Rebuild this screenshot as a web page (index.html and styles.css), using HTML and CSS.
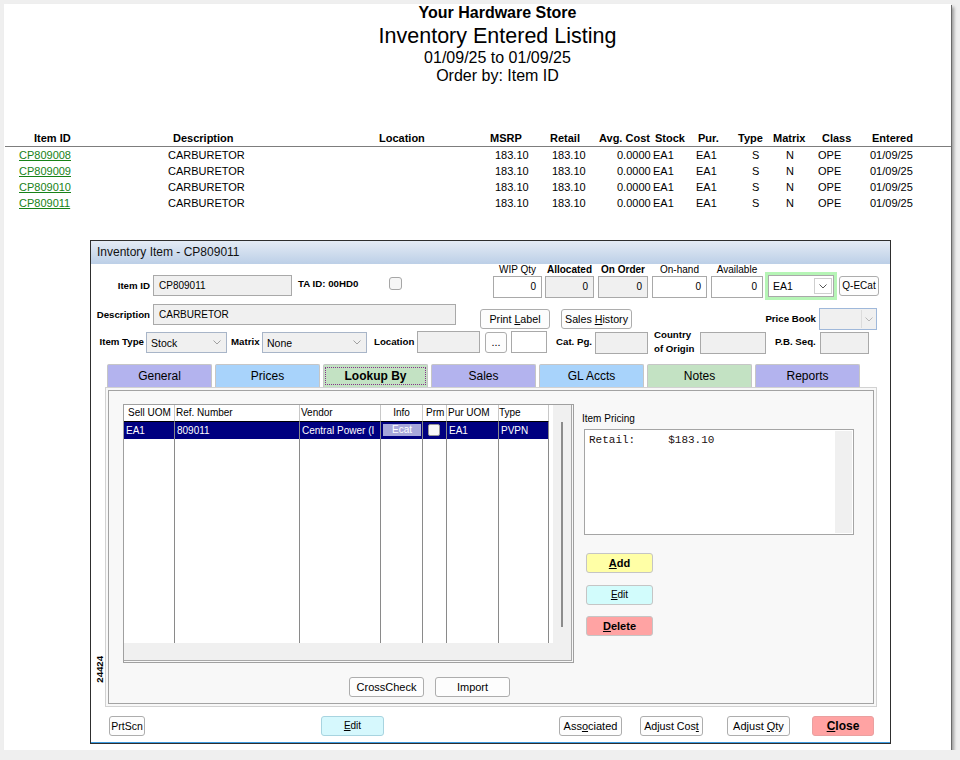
FILE: index.html
```html
<!DOCTYPE html>
<html>
<head>
<meta charset="utf-8">
<title>Inventory Entered Listing</title>
<link rel="stylesheet" href="styles.css">
</head>
<body>
<div class="sheet">
  <div class="rpt-head">
    <div class="h-store">Your Hardware Store</div>
    <div class="h-title">Inventory Entered Listing</div>
    <div class="h-range">01/09/25 to 01/09/25</div>
    <div class="h-order">Order by: Item ID</div>
  </div>
  <div class="rpt">
    <div class="rrow rhead">
      <div>Item ID</div><div>Description</div><div>Location</div><div>MSRP</div><div>Retail</div><div>Avg. Cost</div><div>Stock</div><div>Pur.</div><div>Type</div><div>Matrix</div><div>Class</div><div>Entered</div>
    </div>
    <div class="rrow rdata">
      <div><a href="#">CP809008</a></div><div>CARBURETOR</div><div></div><div>183.10</div><div>183.10</div><div>0.0000</div><div>EA1</div><div>EA1</div><div>S</div><div>N</div><div>OPE</div><div>01/09/25</div>
    </div>
    <div class="rrow rdata">
      <div><a href="#">CP809009</a></div><div>CARBURETOR</div><div></div><div>183.10</div><div>183.10</div><div>0.0000</div><div>EA1</div><div>EA1</div><div>S</div><div>N</div><div>OPE</div><div>01/09/25</div>
    </div>
    <div class="rrow rdata">
      <div><a href="#">CP809010</a></div><div>CARBURETOR</div><div></div><div>183.10</div><div>183.10</div><div>0.0000</div><div>EA1</div><div>EA1</div><div>S</div><div>N</div><div>OPE</div><div>01/09/25</div>
    </div>
    <div class="rrow rdata">
      <div><a href="#">CP809011</a></div><div>CARBURETOR</div><div></div><div>183.10</div><div>183.10</div><div>0.0000</div><div>EA1</div><div>EA1</div><div>S</div><div>N</div><div>OPE</div><div>01/09/25</div>
    </div>
  </div>
</div>

<div class="dlg">
  <div class="dlg-title">Inventory Item - CP809011</div>
  <div class="dlg-body">
    <div class="row row-a">
      <span class="lbl l-itemid">Item ID</span>
      <div class="inp i-itemid">CP809011</div>
      <span class="lbl l-ta">TA ID: 00HD0</span>
      <span class="chk"></span>
      <div class="qty">
        <div class="qcol q1"><span class="qlbl">WIP Qty</span><div class="qbox">0</div></div>
        <div class="qcol q2"><span class="qlbl b">Allocated</span><div class="qbox dis">0</div></div>
        <div class="qcol q3"><span class="qlbl b">On Order</span><div class="qbox dis">0</div></div>
        <div class="qcol q4"><span class="qlbl">On-hand</span><div class="qbox">0</div></div>
        <div class="qcol q5"><span class="qlbl">Available</span><div class="qbox">0</div></div>
      </div>
      <div class="uom">
        <div class="uom-sel"><span>EA1</span><span class="ddbox"><svg width="8" height="5" viewBox="0 0 8 5"><polyline points="0.5,0.5 4,4 7.5,0.5" fill="none" stroke="#555" stroke-width="1"/></svg></span></div>
      </div>
      <button class="btn qecat">Q-ECat</button>
    </div>

    <div class="row row-b">
      <span class="lbl l-desc">Description</span>
      <div class="inp i-desc">CARBURETOR</div>
      <button class="btn b-print">Print <u>L</u>abel</button>
      <button class="btn b-sales">Sales <u>H</u>istory</button>
      <span class="lbl l-pb">Price Book</span>
      <div class="sel s-pb"><span class="chev pbchev"><svg width="8" height="5" viewBox="0 0 8 5"><polyline points="0.5,0.5 4,4 7.5,0.5" fill="none" stroke="#b8b8b8" stroke-width="1"/></svg></span></div>
    </div>

    <div class="row row-c">
      <span class="lbl l-type">Item Type</span>
      <div class="sel s-type"><span>Stock</span><span class="chev"><svg width="8" height="5" viewBox="0 0 8 5"><polyline points="0.5,0.5 4,4 7.5,0.5" fill="none" stroke="#a0a0a0" stroke-width="1"/></svg></span></div>
      <span class="lbl l-matrix">Matrix</span>
      <div class="sel s-matrix"><span>None</span><span class="chev"><svg width="8" height="5" viewBox="0 0 8 5"><polyline points="0.5,0.5 4,4 7.5,0.5" fill="none" stroke="#a0a0a0" stroke-width="1"/></svg></span></div>
      <span class="lbl l-loc">Location</span>
      <div class="inp i-loc"></div>
      <button class="btn b-dots">...</button>
      <div class="inp white i-locw"></div>
      <span class="lbl l-cat">Cat. Pg.</span>
      <div class="inp i-cat"></div>
      <span class="lbl l-coo">Country<br>of Origin</span>
      <div class="inp i-coo"></div>
      <span class="lbl l-pbs">P.B. Seq.</span>
      <div class="inp i-pbs"></div>
    </div>

    <div class="tabs">
      <div class="tab lav">General</div>
      <div class="tab blu">Prices</div>
      <div class="tab grn active"><span class="focus">Lookup By</span></div>
      <div class="tab lav">Sales</div>
      <div class="tab blu">GL Accts</div>
      <div class="tab grn">Notes</div>
      <div class="tab lav">Reports</div>
    </div>

    <div class="prow">
      <div class="vlabel">24424</div>
      <div class="panel">
        <div class="panel-in">
          <div class="lk-top">
            <div class="grid">
              <div class="gwrap">
                <div class="gmain">
                  <div class="gtable">
                    <div class="gc gh h1">Sell UOM</div>
                    <div class="gc gh h2">Ref. Number</div>
                    <div class="gc gh h3">Vendor</div>
                    <div class="gc gh h4">Info</div>
                    <div class="gc gh h5">Prm</div>
                    <div class="gc gh h6">Pur UOM</div>
                    <div class="gc gh h7">Type</div>
                    <div class="gc gs">EA1</div>
                    <div class="gc gs">809011</div>
                    <div class="gc gs">Central Power (I</div>
                    <div class="gc gs gs-info"><span class="ecat">Ecat</span></div>
                    <div class="gc gs gs-prm"><span class="gchk"></span></div>
                    <div class="gc gs">EA1</div>
                    <div class="gc gs">PVPN</div>
                    <div class="gc"></div><div class="gc"></div><div class="gc"></div><div class="gc"></div><div class="gc"></div><div class="gc"></div><div class="gc"></div>
                  </div>
                  <div class="vscroll"><div class="thumb"></div></div>
                </div>
                <div class="hscroll"></div>
              </div>
            </div>
            <div class="pricing">
              <div class="pr-lbl">Item Pricing</div>
              <div class="pbox">
                <div class="ptext">Retail:     $183.10</div>
                <div class="pscroll"></div>
              </div>
              <button class="btn cbtn add"><u>A</u>dd</button>
              <button class="btn cbtn edit1"><u>E</u>dit</button>
              <button class="btn cbtn del"><u>D</u>elete</button>
            </div>
          </div>
          <div class="lk-bottom">
            <button class="btn b-cross">CrossCheck</button>
            <button class="btn b-import">Import</button>
          </div>
        </div>
      </div>
    </div>

    <div class="row row-bot">
      <button class="btn b-prt">PrtScn</button>
      <button class="btn b-edit"><u>E</u>dit</button>
      <button class="btn b-assoc">Ass<u>o</u>ciated</button>
      <button class="btn b-acost">Adjust Cos<u>t</u></button>
      <button class="btn b-aqty">Adjust <u>Q</u>ty</button>
      <button class="btn b-close"><u>C</u>lose</button>
    </div>
  </div>
</div>
</body>
</html>
```

FILE: styles.css
```css
* { box-sizing: border-box; }
body {
  margin: 0;
  background: #efefef;
  font-family: "Liberation Sans", Arial, sans-serif;
  color: #000;
}

/* ---------- report sheet ---------- */
.sheet {
  margin: 4px 0 0 4px;
  width: 947px;
  height: 746px;
  background: #fff;
  box-shadow: 1px 1px 0 #6a6a6a, 3px 3px 3px rgba(0,0,0,0.35);
}
.rpt-head { padding-left: 40px; text-align: center; }
.h-store { font-size: 16px; font-weight: bold; line-height: 18px; }
.h-title { font-size: 21.5px; line-height: 28px; }
.h-range { font-size: 16px; line-height: 16px; }
.h-order { font-size: 16px; line-height: 20px; }

.rpt { margin: 44px 0 0 1px; width: 946px; font-size: 11px; }
.rrow {
  display: grid;
  grid-template-columns: 95px 205px 175px 50px 60px 63px 37px 40px 38px 44px 48px 91px;
  height: 16px;
  line-height: 16px;
  white-space: nowrap;
}
.rhead { font-weight: bold; height: 17px; border-bottom: 1px solid #7d7d7d; }
.rhead > div:nth-child(1) { padding-left: 29px; }
.rhead > div:nth-child(2) { padding-left: 73px; }
.rhead > div:nth-child(3) { padding-left: 74px; }
.rhead > div:nth-child(4) { padding-left: 10px; }
.rhead > div:nth-child(5) { padding-left: 20px; }
.rhead > div:nth-child(6) { padding-left: 9px; }
.rhead > div:nth-child(7) { padding-left: 2px; }
.rhead > div:nth-child(8) { padding-left: 8px; }
.rhead > div:nth-child(9) { padding-left: 8px; }
.rhead > div:nth-child(10) { padding-left: 5px; }
.rhead > div:nth-child(11) { padding-left: 10px; }
.rhead > div:nth-child(12) { padding-left: 12px; }
.rdata > div:nth-child(1) { padding-left: 14px; }
.rdata > div:nth-child(2) { padding-left: 68px; }
.rdata > div:nth-child(4) { padding-left: 15px; }
.rdata > div:nth-child(5) { padding-left: 22px; }
.rdata > div:nth-child(6) { padding-left: 27px; }
.rdata > div:nth-child(7) { padding-left: 0; }
.rdata > div:nth-child(8) { padding-left: 6px; }
.rdata > div:nth-child(9) { padding-left: 22px; }
.rdata > div:nth-child(10) { padding-left: 18px; }
.rdata > div:nth-child(11) { padding-left: 6px; }
.rdata > div:nth-child(12) { padding-left: 10px; }
.rdata a { color: #178217; text-decoration: underline; }

/* ---------- dialog ---------- */
.dlg {
  position: absolute;
  left: 90px;
  top: 240px;
  width: 801px;
  height: 504px;
  border: 1px solid #2e2e2e;
  background: #fff;
}
.dlg-title {
  height: 23px;
  line-height: 23px;
  padding-left: 6px;
  font-size: 12px;
  color: #111;
  background: linear-gradient(#e4ebf5, #bccfe7);
}
.dlg-body { height: 479px; border-bottom: 1px solid #3d9be0; }

button {
  font-family: inherit;
  color: #000;
  padding: 0;
  margin: 0;
  cursor: default;
}
u { text-decoration: underline; }

.row { display: flex; align-items: flex-start; }
.row-a { height: 36px; }
.row-b { height: 26px; margin-top: 4px; }
.row-c { height: 22px; margin-top: 1px; }

.lbl { font-weight: bold; font-size: 9.7px; white-space: nowrap; }
.inp {
  border: 1px solid #a9a9a9;
  background: #f0f0f0;
  font-size: 10px;
  padding-left: 5px;
  line-height: 19px;
  white-space: nowrap;
}
.inp.white { background: #fff; }
.btn {
  border: 1px solid #adadad;
  border-radius: 3px;
  background: #fdfdfd;
  font-size: 10.7px;
  text-align: center;
  line-height: 18px;
  white-space: nowrap;
}
.sel {
  display: flex;
  align-items: center;
  border: 1px solid #a8b5c8;
  background: #f0f0f0;
  font-size: 10.5px;
  padding-left: 4px;
}
.chev {
  margin-left: auto;
  width: 18px;
  height: 100%;
  display: flex;
  align-items: center;
  justify-content: center;
}

/* row A */
.l-itemid { width: 59px; text-align: right; margin-top: 11px; line-height: 21px; }
.i-itemid { margin: 11px 0 0 3px; width: 139px; height: 21px; }
.l-ta { margin: 9px 0 0 6px; width: 91px; line-height: 21px; }
.chk {
  width: 13px;
  height: 13px;
  margin-top: 13px;
  border: 1px solid #a6a6a6;
  border-radius: 3px;
  background: #f6f6f6;
}
.qty { display: flex; margin-left: 91px; }
.qcol { display: flex; flex-direction: column; align-items: center; }
.qlbl { font-size: 10px; line-height: 12px; white-space: nowrap; }
.qlbl.b { font-weight: bold; }
.qbox {
  width: 100%;
  height: 22px;
  border: 1px solid #a9a9a9;
  background: #fff;
  font-size: 10px;
  line-height: 20px;
  text-align: right;
  padding-right: 5px;
}
.qbox.dis { background: #f0f0f0; }
.q1 { width: 49px; }
.q2 { width: 49px; margin-left: 3px; }
.q3 { width: 50px; margin-left: 4px; }
.q4 { width: 55px; margin-left: 4px; }
.q5 { width: 52px; margin-left: 4px; }
.uom {
  margin: 8px 0 0 2px;
  width: 72px;
  height: 28px;
  background: #b6f5b6;
  padding: 3px;
}
.uom-sel {
  height: 22px;
  border: 1px solid #a9a9a9;
  background: #fff;
  display: flex;
  align-items: center;
  padding-left: 4px;
  font-size: 10.5px;
}
.ddbox {
  margin-left: auto;
  margin-right: 1px;
  width: 18px;
  height: 16px;
  border: 1px solid #cfcfcf;
  display: flex;
  align-items: center;
  justify-content: center;
}
.qecat { margin: 12px 0 0 2px; width: 40px; height: 20px; font-size: 10px; }

/* row B */
.l-desc { width: 59px; text-align: right; line-height: 21px; }
.i-desc { margin-left: 3px; width: 303px; height: 21px; }
.b-print { margin: 5px 0 0 24px; width: 70px; height: 20px; }
.b-sales { margin: 5px 0 0 11px; width: 71px; height: 20px; }
.l-pb { margin: 5px 0 0 130px; width: 54px; text-align: right; line-height: 20px; }
.s-pb { margin: 4px 0 0 3px; width: 58px; height: 22px; border-color: #9fb8da; }
.pbchev { width: 14px; height: 18px; border-left: 1px solid #dcdcdc; margin-right: 1px; }

/* row C */
.l-type { margin-left: 5px; width: 48px; text-align: right; line-height: 22px; }
.s-type { margin: 1px 0 0 2px; width: 81px; height: 21px; }
.l-matrix { margin-left: 4px; width: 30px; line-height: 22px; }
.s-matrix { margin: 1px 0 0 1px; width: 105px; height: 21px; }
.l-loc { margin-left: 7px; width: 42px; line-height: 22px; }
.i-loc { margin-left: 1px; width: 63px; height: 22px; }
.b-dots { margin: 1px 0 0 5px; width: 22px; height: 21px; line-height: 17px; }
.i-locw { margin-left: 4px; width: 36px; height: 22px; }
.l-cat { margin-left: 9px; width: 39px; line-height: 22px; }
.i-cat { margin-top: 1px; width: 53px; height: 22px; }
.l-coo { margin: -3px 0 0 6px; width: 46px; line-height: 14px; }
.i-coo { margin-top: 1px; width: 66px; height: 22px; }
.l-pbs { margin-left: 9px; width: 45px; line-height: 22px; }
.i-pbs { margin-top: 1px; width: 49px; height: 22px; }

/* tabs */
.tabs { display: flex; margin: 11px 0 0 16px; height: 23px; }
.tab {
  width: 105px;
  margin-right: 3px;
  height: 23px;
  border: 1px solid #c6c6c6;
  border-bottom: 0;
  border-radius: 2px 2px 0 0;
  font-size: 12px;
  line-height: 22px;
  text-align: center;
}
.lav { background: #b3b3ee; }
.blu { background: #a8d3fb; }
.grn { background: #c3e2c3; }
.tab.active { padding: 2px 1px 0; font-weight: bold; }
.focus {
  display: block;
  height: 18px;
  line-height: 16px;
  border: 1px dotted #86328a;
}

/* tab page */
.prow { display: flex; height: 320px; }
.vlabel {
  width: 8px;
  margin-left: 5px;
  align-self: flex-end;
  margin-bottom: 24px;
  writing-mode: vertical-rl;
  transform: rotate(180deg);
  font-weight: bold;
  font-size: 9.6px;
  line-height: 8px;
}
.panel {
  margin-left: 1px;
  width: 772px;
  height: 320px;
  border: 1px solid #d2d2d2;
  padding: 2px;
  background: #f8f8f8;
}
.panel-in { height: 100%; border: 1px solid #a3a3a3; background: #f8f8f8; }
.lk-top { display: flex; align-items: flex-start; margin-top: 13px; padding-left: 14px; }

.grid {
  width: 451px;
  height: 259px;
  border: 1px solid #a0a0a0;
  padding: 0 1px 1px 0;
  background: #f8f8f8;
}
.gwrap {
  height: 100%;
  border-right: 1px solid #a8a8a8;
  border-bottom: 1px solid #a8a8a8;
  display: flex;
  flex-direction: column;
}
.gmain { display: flex; height: 238px; }
.gtable {
  width: 429px;
  background: #fff;
  display: grid;
  grid-template-columns: 51px 125px 81px 42px 24px 52px 50px;
  grid-template-rows: 17px 17px 1fr;
  font-size: 10px;
}
.gc { border-right: 1px solid #8a8a8a; overflow: hidden; white-space: nowrap; }
.gh { border-bottom: 1px solid #000; line-height: 16px; border-right-color: #c8c8c8; }
.h1 { padding-left: 4px; }
.h2, .h3, .h6 { padding-left: 1px; }
.h4 { text-align: center; }
.h5 { padding-left: 3px; }
.gs { background: #000080; color: #fff; line-height: 17px; padding-left: 2px; }
.gs-info, .gs-prm { padding-left: 0; }
.ecat {
  display: block;
  margin: 2px 0 0 2px;
  width: 38px;
  height: 12px;
  background: #a7a7da;
  color: #fff;
  font-size: 10px;
  line-height: 12px;
  text-align: center;
}
.gchk {
  display: block;
  margin: 2px 0 0 5px;
  width: 12px;
  height: 12px;
  background: #f8f8f8;
  border: 1px solid #999;
  border-radius: 2px;
}
.vscroll { width: 18px; background: #f0f0f0; padding: 17px 0 0 8px; }
.thumb { width: 2px; height: 205px; background: #8c8c8c; }
.hscroll { height: 17px; background: #f0f0f0; }

.pricing { margin-left: 8px; width: 272px; }
.pr-lbl { font-size: 10px; line-height: 12px; margin-top: 9px; }
.pbox {
  margin: 4px 0 0 2px;
  width: 270px;
  height: 106px;
  border: 1px solid #a5a5a5;
  background: #fff;
  display: flex;
}
.ptext {
  flex: 1;
  font-family: "Liberation Mono", "Courier New", monospace;
  font-size: 11px;
  line-height: 13px;
  padding: 4px 0 0 4px;
  white-space: pre;
  color: #1a1010;
}
.pscroll { width: 17px; margin: 1px 1px 1px 0; background: #f0f0f0; }
.cbtn {
  display: block;
  width: 67px;
  height: 20px;
  margin-left: 4px;
  border-color: #c5c5c5;
}
.add { margin-top: 18px; background: #ffffa6; font-weight: bold; font-size: 11px; }
.edit1 { margin-top: 12px; background: #d2fcfc; font-size: 10px; }
.del { margin-top: 11px; background: #ffa3a3; font-weight: bold; font-size: 11px; }

.lk-bottom { display: flex; margin-top: 14px; padding-left: 240px; }
.b-cross { width: 75px; height: 20px; font-size: 11px; }
.b-import { margin-left: 11px; width: 75px; height: 20px; font-size: 11px; }

/* bottom buttons */
.row-bot { margin-top: 9px; height: 20px; }
.row-bot .btn { height: 20px; }
.b-prt { margin-left: 18px; width: 36px; font-size: 10.5px; }
.b-edit { margin-left: 176px; width: 63px; background: #d6f8fd; border-color: #a8d4e0; font-size: 10px; }
.b-assoc { margin-left: 175px; width: 63px; font-size: 11px; }
.b-acost { margin-left: 18px; width: 63px; }
.b-aqty { margin-left: 24px; width: 63px; font-size: 11px; }
.b-close { margin-left: 22px; width: 62px; background: #ffa3a3; border-color: #eaa0a0; font-weight: bold; font-size: 12px; }
```
